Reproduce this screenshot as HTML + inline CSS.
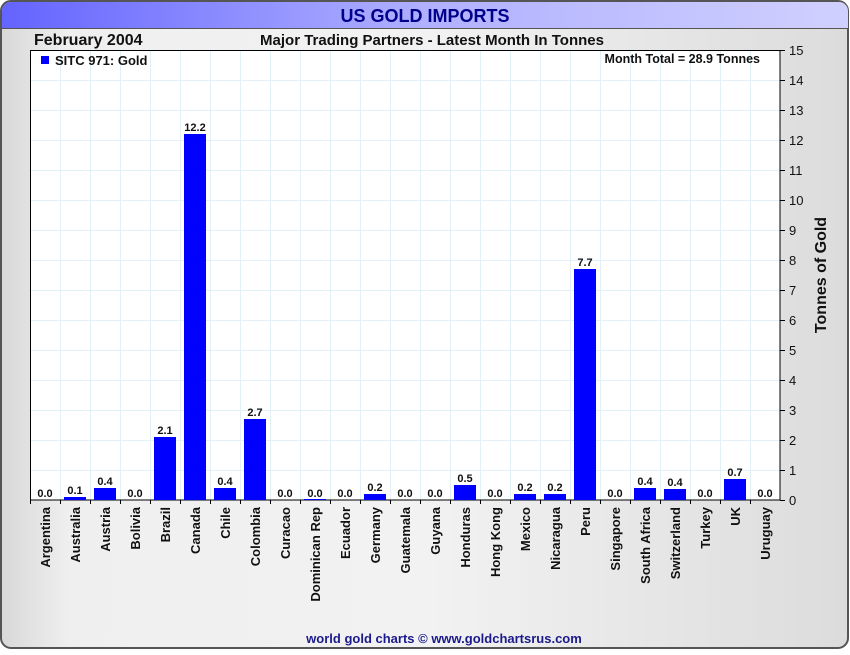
<!DOCTYPE html>
<html><head><style>
body{margin:0;width:850px;height:650px;overflow:hidden;background:#fff;font-family:"Liberation Sans",sans-serif}
</style></head><body>
<svg width="850" height="650" xmlns="http://www.w3.org/2000/svg" font-family="Liberation Sans, sans-serif">
<defs>
<linearGradient id="tb" x1="0" x2="1"><stop offset="0" stop-color="#6464ff"/><stop offset="0.5" stop-color="#b0b0ff"/><stop offset="1" stop-color="#d0d0ff"/></linearGradient>
<linearGradient id="bg" x1="0" x2="1"><stop offset="0" stop-color="#d8d8d8"/><stop offset="0.08" stop-color="#efefef"/><stop offset="0.5" stop-color="#f2f2f2"/><stop offset="1" stop-color="#dcdcdc"/></linearGradient>
</defs>
<rect x="1" y="1" width="847" height="647" rx="10" fill="url(#bg)" stroke="#555" stroke-width="2"/>
<path d="M2 28 V11 A9 9 0 0 1 11 2 H839 A9 9 0 0 1 848 11 V28 Z" fill="url(#tb)"/>
<line x1="2" y1="28.5" x2="848" y2="28.5" stroke="#555"/>
<text x="425" y="22" text-anchor="middle" font-weight="bold" font-size="18" fill="#00008b">US GOLD IMPORTS</text>
<text x="34" y="45" font-weight="bold" font-size="16" fill="#111">February 2004</text>
<text x="432" y="45" text-anchor="middle" font-weight="bold" font-size="15" fill="#111">Major Trading Partners - Latest Month In Tonnes</text>
<rect x="30" y="50" width="750" height="450" fill="#fff"/>
<g stroke="#e2f0f8" stroke-width="1">
<path d="M60.5 50V500M90.5 50V500M120.5 50V500M150.5 50V500M180.5 50V500M210.5 50V500M240.5 50V500M270.5 50V500M300.5 50V500M330.5 50V500M360.5 50V500M390.5 50V500M420.5 50V500M450.5 50V500M480.5 50V500M510.5 50V500M540.5 50V500M570.5 50V500M600.5 50V500M630.5 50V500M660.5 50V500M690.5 50V500M720.5 50V500M750.5 50V500"/>
<path d="M30 80.5H780M30 110.5H780M30 140.5H780M30 170.5H780M30 200.5H780M30 230.5H780M30 260.5H780M30 290.5H780M30 320.5H780M30 350.5H780M30 380.5H780M30 410.5H780M30 440.5H780M30 470.5H780"/>
</g>
<rect x="30.5" y="50.5" width="749.5" height="449.5" fill="none" stroke="#000"/>
<rect x="41" y="56" width="8" height="8" fill="#0000ff"/>
<text x="55" y="65" font-weight="bold" font-size="13" fill="#111">SITC 971: Gold</text>
<text x="760" y="63" text-anchor="end" font-weight="bold" font-size="12.5" fill="#111">Month Total = 28.9 Tonnes</text>
<g fill="#0000ff">
<rect x="64" y="497" width="22" height="3"/>
<rect x="94" y="488" width="22" height="12"/>
<rect x="154" y="437" width="22" height="63"/>
<rect x="184" y="134" width="22" height="366"/>
<rect x="214" y="488" width="22" height="12"/>
<rect x="244" y="419" width="22" height="81"/>
<rect x="304" y="499" width="22" height="1"/>
<rect x="364" y="494" width="22" height="6"/>
<rect x="454" y="485" width="22" height="15"/>
<rect x="514" y="494" width="22" height="6"/>
<rect x="544" y="494" width="22" height="6"/>
<rect x="574" y="269" width="22" height="231"/>
<rect x="634" y="488" width="22" height="12"/>
<rect x="664" y="489" width="22" height="11"/>
<rect x="724" y="479" width="22" height="21"/>
</g>
<g font-weight="bold" font-size="11" text-anchor="middle" fill="#111">
<text x="45" y="497">0.0</text><text x="75" y="494">0.1</text><text x="105" y="485">0.4</text><text x="135" y="497">0.0</text><text x="165" y="434">2.1</text><text x="195" y="131">12.2</text><text x="225" y="485">0.4</text><text x="255" y="416">2.7</text><text x="285" y="497">0.0</text><text x="315" y="497">0.0</text><text x="345" y="497">0.0</text><text x="375" y="491">0.2</text><text x="405" y="497">0.0</text><text x="435" y="497">0.0</text><text x="465" y="482">0.5</text><text x="495" y="497">0.0</text><text x="525" y="491">0.2</text><text x="555" y="491">0.2</text><text x="585" y="266">7.7</text><text x="615" y="497">0.0</text><text x="645" y="485">0.4</text><text x="675" y="486">0.4</text><text x="705" y="497">0.0</text><text x="735" y="476">0.7</text><text x="765" y="497">0.0</text>
</g>
<g stroke="#000"><path d="M30.5 500V504M60.5 500V504M90.5 500V504M120.5 500V504M150.5 500V504M180.5 500V504M210.5 500V504M240.5 500V504M270.5 500V504M300.5 500V504M330.5 500V504M360.5 500V504M390.5 500V504M420.5 500V504M450.5 500V504M480.5 500V504M510.5 500V504M540.5 500V504M570.5 500V504M600.5 500V504M630.5 500V504M660.5 500V504M690.5 500V504M720.5 500V504M750.5 500V504"/>
<path d="M780 50.5H785M780 80.5H785M780 110.5H785M780 140.5H785M780 170.5H785M780 200.5H785M780 230.5H785M780 260.5H785M780 290.5H785M780 320.5H785M780 350.5H785M780 380.5H785M780 410.5H785M780 440.5H785M780 470.5H785M780 500.5H785"/></g>
<g font-size="13" fill="#111">
<text x="789" y="55">15</text><text x="789" y="85">14</text><text x="789" y="115">13</text><text x="789" y="145">12</text><text x="789" y="175">11</text><text x="789" y="205">10</text><text x="789" y="235">9</text><text x="789" y="265">8</text><text x="789" y="295">7</text><text x="789" y="325">6</text><text x="789" y="355">5</text><text x="789" y="385">4</text><text x="789" y="415">3</text><text x="789" y="445">2</text><text x="789" y="475">1</text><text x="789" y="505">0</text>
</g>
<text transform="translate(826 275) rotate(-90)" text-anchor="middle" font-weight="bold" font-size="16" fill="#111">Tonnes of Gold</text>
<g font-weight="bold" font-size="13" text-anchor="end" fill="#111">
<text transform="translate(50 507) rotate(-90)">Argentina</text>
<text transform="translate(80 507) rotate(-90)">Australia</text>
<text transform="translate(110 507) rotate(-90)">Austria</text>
<text transform="translate(140 507) rotate(-90)">Bolivia</text>
<text transform="translate(170 507) rotate(-90)">Brazil</text>
<text transform="translate(200 507) rotate(-90)">Canada</text>
<text transform="translate(230 507) rotate(-90)">Chile</text>
<text transform="translate(260 507) rotate(-90)">Colombia</text>
<text transform="translate(290 507) rotate(-90)">Curacao</text>
<text transform="translate(320 507) rotate(-90)">Dominican Rep</text>
<text transform="translate(350 507) rotate(-90)">Ecuador</text>
<text transform="translate(380 507) rotate(-90)">Germany</text>
<text transform="translate(410 507) rotate(-90)">Guatemala</text>
<text transform="translate(440 507) rotate(-90)">Guyana</text>
<text transform="translate(470 507) rotate(-90)">Honduras</text>
<text transform="translate(500 507) rotate(-90)">Hong Kong</text>
<text transform="translate(530 507) rotate(-90)">Mexico</text>
<text transform="translate(560 507) rotate(-90)">Nicaragua</text>
<text transform="translate(590 507) rotate(-90)">Peru</text>
<text transform="translate(620 507) rotate(-90)">Singapore</text>
<text transform="translate(650 507) rotate(-90)">South Africa</text>
<text transform="translate(680 507) rotate(-90)">Switzerland</text>
<text transform="translate(710 507) rotate(-90)">Turkey</text>
<text transform="translate(740 507) rotate(-90)">UK</text>
<text transform="translate(770 507) rotate(-90)">Uruguay</text>
</g>
<text x="444" y="643" text-anchor="middle" font-weight="bold" font-size="13" fill="#1a1a8c">world gold charts © www.goldchartsrus.com</text>
</svg>
</body></html>
